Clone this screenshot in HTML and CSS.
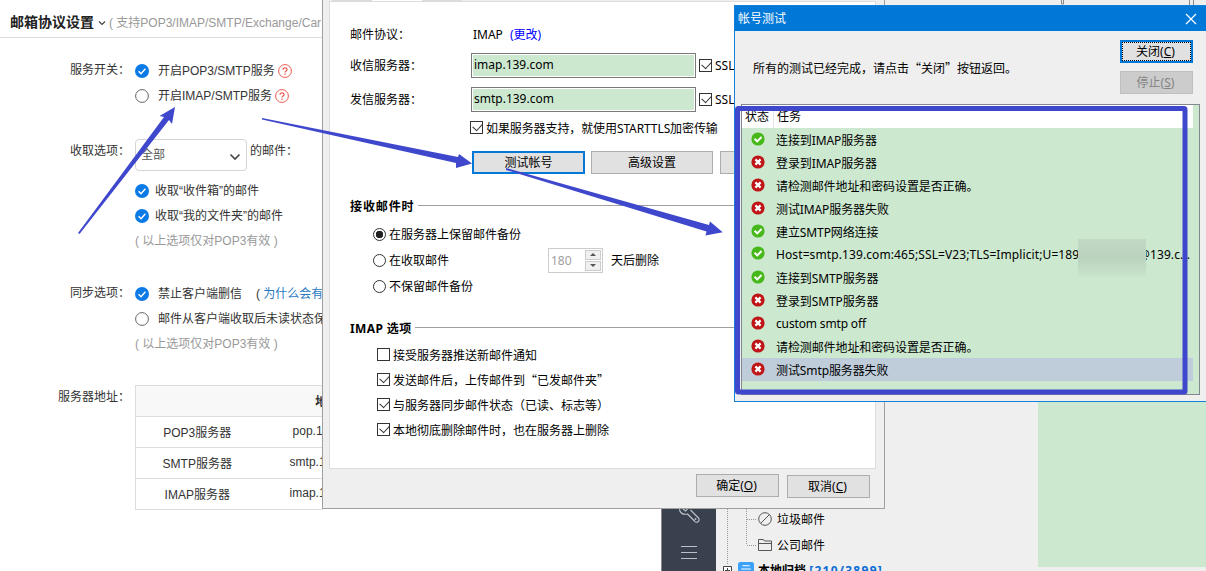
FILE: index.html
```html
<!DOCTYPE html>
<html lang="zh-CN">
<head>
   <meta charset="UTF-8">
   <meta name="viewport" content="width=device-width, initial-scale=1.0">
   <title>邮箱协议设置</title>
   <link rel="stylesheet" href="styles.css">
</head>
<body>
   <!-- shared icons -->
   <svg class="defs">
      <symbol id="tick" viewBox="0 0 14 14">
         <circle cx="7" cy="7" r="7" fill="#0a7ae6"/>
         <path d="M3.6 7.2l2.4 2.5 4.4-5" fill="none" stroke="#fff" stroke-width="1.4"/>
      </symbol>
      <symbol id="empty" viewBox="0 0 14 14">
         <circle cx="7" cy="7" r="6.4" fill="#fff" stroke="#666"/>
      </symbol>
      <symbol id="help" viewBox="0 0 14 14">
         <circle cx="7" cy="7" r="6.4" fill="none" stroke="#ee5b50"/>
         <path d="M5 5.7c0-2.5 4-2.5 4 0C9 7 7 7 7 8.6M7 9.6v1.3" fill="none" stroke="#ee5b50" stroke-width="1.2"/>
      </symbol>
      <symbol id="ok" viewBox="0 0 14 14">
         <circle cx="7" cy="7" r="6.6" fill="#46b81a"/>
         <path d="M3.6 6.8l2.6 2.6 4.4-4.4" fill="none" stroke="#fff" stroke-width="2"/>
      </symbol>
      <symbol id="fail" viewBox="0 0 14 14">
         <circle cx="7" cy="7" r="6.6" fill="#c01517"/>
         <path d="M4.4 4.4l5.2 5.2M9.6 4.4L4.4 9.6" fill="none" stroke="#fff" stroke-width="2.2"/>
      </symbol>
   </svg>

   <div class="desktop">
      <div class="web">
         <header>
            <b>邮箱协议设置</b>
            <svg class="chev" viewBox="0 0 8 6"><path d="M1 1.5l3 3 3-3" fill="none" stroke="#444" stroke-width="1.2"/></svg>
            <span class="gray">( 支持POP3/IMAP/SMTP/Exchange/Car</span>
         </header>

         <div class="group switch">
            <label>服务开关：</label>
            <div>
               <div class="line"><svg class="ic"><use href="#tick"/></svg><span class="wide">开启POP3/SMTP服务</span><svg class="ic help"><use href="#help"/></svg></div>
               <div class="line"><svg class="ic"><use href="#empty"/></svg><span class="wide">开启IMAP/SMTP服务</span><svg class="ic help"><use href="#help"/></svg></div>
            </div>
         </div>

         <div class="group receive">
            <label>收取选项：</label>
            <div>
               <div class="pick">
                  <div class="select">全部<svg viewBox="0 0 12 8"><path d="M1.5 1.5L6 6l4.500-4.500" fill="none" stroke="#444" stroke-width="1.6"/></svg></div>
                  <span>的邮件：</span>
               </div>
               <div class="line"><svg class="ic"><use href="#tick"/></svg><span>收取“收件箱”的邮件</span></div>
               <div class="line"><svg class="ic"><use href="#tick"/></svg><span>收取“我的文件夹”的邮件</span></div>
               <div class="line gray"><span>( 以上选项仅对POP3有效 )</span></div>
            </div>
         </div>

         <div class="group sync">
            <label>同步选项：</label>
            <div>
               <div class="line"><svg class="ic"><use href="#tick"/></svg><span class="wide">禁止客户端删信</span><span class="why">( <a>为什么会有</a></span></div>
               <div class="line"><svg class="ic"><use href="#empty"/></svg><span class="wide">邮件从客户端收取后未读状态保</span></div>
               <div class="line gray"><span>( 以上选项仅对POP3有效 )</span></div>
            </div>
         </div>

         <div class="group address">
            <label>服务器地址：</label>
            <table>
               <tr><th></th><th>地址</th></tr>
               <tr><td>POP3服务器</td><td>pop.139.com</td></tr>
               <tr><td>SMTP服务器</td><td>smtp.139.com</td></tr>
               <tr><td>IMAP服务器</td><td>imap.139.com</td></tr>
            </table>
         </div>
      </div>

      <div class="client">
         <div class="sidebar">
            <svg viewBox="0 0 55 62" width="55" height="62">
               <path d="M17.500 0c0 4 3.500 6 8 5l7 7c2 3 6 0 4-3l-8-8M21 0l2.500 2 2-2" fill="none" stroke="#b9c0c8" stroke-width="1.2"/>
               <circle cx="33.500" cy="10" r="1" fill="#b9c0c8"/>
               <path d="M19 37.500h16M19 43.500h16M19 49.500h16" stroke="#b9c0c8"/>
            </svg>
         </div>
         <div class="tree">
            <div class="node">
               <svg class="ic" viewBox="0 0 14 14"><circle cx="7" cy="7" r="6.300" fill="none" stroke="#555"/><path d="M2.800 11.200l8.400-8.400" stroke="#555"/></svg>垃圾邮件
            </div>
            <div class="node">
               <svg class="ic" viewBox="0 0 14 14"><path d="M.5 12.500v-11h5l1 1.500h7v9.500zM.5 5.500h13" fill="none" stroke="#555"/></svg>公司邮件
            </div>
            <div class="node archive">
               <svg class="plus" viewBox="0 0 9 9"><path d="M.5.5h8v8h-8zM2 4.500h5M4.500 2v5" fill="#fff" stroke="#444"/></svg>
               <svg class="box" viewBox="0 0 15 15"><rect width="15" height="15" rx="2" fill="#3ba1fa"/><path d="M4 3.500h7M3 6.500h9M2 9.500h11" stroke="#fff"/></svg>
               <b>本地归档 <i>[210/3899]</i></b>
            </div>
            <svg class="dots" width="40" height="62"><path d="M11.500 0v56M30.500 0v36M31 10.500h10M31 36.500h10" stroke="#999" stroke-dasharray="1 1"/></svg>
         </div>
         <div class="mail">
            <svg width="168" height="6"><path d="M23.500 0v4h2V0M151.500 0v6M155.500 0v6" fill="none" stroke="#888"/></svg>
         </div>
      </div>

      <div class="settings">
         <div class="tabs"><span></span><span class="on"></span><span></span></div>
         <div class="panel">
            <div class="row proto"><label>邮件协议：</label><span>IMAP</span><a>(更改)</a></div>
            <div class="row server"><label>收信服务器：</label><div class="input">imap.139.com</div><i class="cb on"></i>SSL</div>
            <div class="row server"><label>发信服务器：</label><div class="input">smtp.139.com</div><i class="cb on"></i>SSL</div>
            <div class="row tls"><i class="cb on"></i><span>如果服务器支持，就使用STARTTLS加密传输</span></div>
            <div class="row actions"><button class="focus">测试帐号</button><button>高级设置</button><button></button></div>

            <h3>接收邮件时</h3>
            <div class="row radio"><i class="rb on"></i>在服务器上保留邮件备份</div>
            <div class="row radio"><i class="rb"></i><span class="fetch">在收取邮件</span>
               <div class="spin">180<div><i class="up"></i><i class="down"></i></div></div>天后删除
            </div>
            <div class="row radio"><i class="rb"></i>不保留邮件备份</div>

            <h3 class="second">IMAP 选项</h3>
            <div class="row check"><i class="cb"></i>接受服务器推送新邮件通知</div>
            <div class="row check"><i class="cb on"></i><span>发送邮件后，上传邮件到<q>“</q>已发邮件夹<q>”</q></span></div>
            <div class="row check"><i class="cb on"></i>与服务器同步邮件状态（已读、标志等）</div>
            <div class="row check"><i class="cb on"></i>本地彻底删除邮件时，也在服务器上删除</div>
         </div>
         <div class="foot"><button>确定(<u>O</u>)</button><button>取消(<u>C</u>)</button></div>
      </div>

      <div class="test">
         <div class="title"><span>帐号测试</span><svg viewBox="0 0 12 12"><path d="M1 1l10 10M11 1L1 11" stroke="#fff" stroke-width="1.2"/></svg></div>
         <div class="top">
            <p>所有的测试已经完成，请点击<q>“</q>关闭<q>”</q>按钮返回。</p>
            <div class="btns">
               <button class="focus dotted">关闭(<u>C</u>)</button>
               <button class="off">停止(<u>S</u>)</button>
            </div>
         </div>
         <div class="list">
            <div class="head"><span>状态</span><span>任务</span></div>
            <div class="task"><svg><use href="#ok"/></svg><span>连接到IMAP服务器</span></div>
            <div class="task"><svg><use href="#fail"/></svg><span>登录到IMAP服务器</span></div>
            <div class="task"><svg><use href="#fail"/></svg><span>请检测邮件地址和密码设置是否正确。</span></div>
            <div class="task"><svg><use href="#fail"/></svg><span>测试IMAP服务器失败</span></div>
            <div class="task"><svg><use href="#ok"/></svg><span>建立SMTP网络连接</span></div>
            <div class="task host"><svg><use href="#ok"/></svg><span>Host=smtp.139.com:465;SSL=V23;TLS=Implicit;U=189</span><em>@139.c...</em><div class="mask"></div></div>
            <div class="task"><svg><use href="#ok"/></svg><span>连接到SMTP服务器</span></div>
            <div class="task"><svg><use href="#fail"/></svg><span>登录到SMTP服务器</span></div>
            <div class="task"><svg><use href="#fail"/></svg><span class="plain">custom smtp off</span></div>
            <div class="task"><svg><use href="#fail"/></svg><span>请检测邮件地址和密码设置是否正确。</span></div>
            <div class="task sel"><svg><use href="#fail"/></svg><span>测试Smtp服务器失败</span></div>
         </div>
      </div>

      <!-- marker arrows and frame -->
      <svg class="marks" viewBox="0 0 1206 571">
         <path d="M78 233l86-116-4.500-1L175 107l-3 17-3-4L79.500 234z"/>
         <path d="M262 118L458 157l1-3 13 9.500-16 4.500V163L262 119.500z"/>
         <path d="M506 168L709 225l1-3.500 12.700 10.800-17.200 3.200 1-4L506 170z"/>
         <rect x="737.500" y="108.500" width="447.500" height="283.500" rx="1"/>
      </svg>
   </div>
</body>
</html>
```
FILE: styles.css
```css
*{
   margin: 0;
   padding: 0;
   box-sizing: border-box;
}

body{
   background: #fff;
   overflow: hidden;
}

.defs{
   display: none;
}

.desktop{
   position: relative;
   width: 1206px;
   height: 571px;
   overflow: hidden;
   font: 12px "Noto Sans", "Noto Sans CJK SC", sans-serif;
   color: #000;
   white-space: nowrap;
}

i, em{
   font-style: normal;
}

q{
   quotes: none;
   font-family: "Noto Sans CJK SC", sans-serif;
}

q::before, q::after{
   content: none;
}

/* web mail page */
.web{
   width: 323px;
   height: 571px;
   overflow: hidden;
   font-family: "Liberation Sans", "Noto Sans CJK SC", sans-serif;
   color: #333;
}

.web header{
   display: flex;
   align-items: center;
   height: 38px;
   padding: 6px 0 0 10px;
   border-bottom: 1px solid #ddd;
}

.web header b{
   margin-top: -2px;
   font-size: 14px;
   color: #222;
}

.chev{
   width: 8px;
   height: 6px;
   margin: 2px 3px 0 4px;
   flex: none;
}

.gray{
   color: #999;
}

.group{
   display: flex;
}

.group > label{
   flex: none;
   width: 130px;
   margin-right: 5px;
   line-height: 24px;
   text-align: right;
}

.switch{ margin-top: 20px; }
.receive{ margin-top: 31px; }
.sync{ margin-top: 28px; }
.address{ margin-top: 29px; }

.line{
   display: flex;
   align-items: center;
   height: 25px;
}

.line span{
   margin-top: -2px;
}

.ic{
   flex: none;
   width: 14px;
   height: 14px;
   margin: 1px 6px 0 0;
}

.line .wide{
   margin-left: 3px;
}

.line .help{
   margin-left: 3px;
}

.line .why{
   margin-left: 14px;
}

.why a{
   color: #2878c0;
}

.pick{
   display: flex;
   height: 32px;
   margin-bottom: 7px;
   line-height: 24px;
}

.select{
   display: flex;
   align-items: center;
   justify-content: space-between;
   width: 112px;
   margin-right: 3px;
   padding: 0 5px;
   border: 1px solid #d5d5d5;
   border-radius: 4px;
   color: #555;
}

.select svg{
   width: 12px;
   height: 8px;
   margin-top: 3px;
}

table{
   border-collapse: collapse;
   table-layout: fixed;
   width: 262px;
   flex: none;
   border: 1px solid #ddd;
   text-align: center;
}

tr{
   height: 31px;
   border-bottom: 1px solid #ddd;
}

th{
   background: #f8f8f8;
}

th, td{
   padding-bottom: 2px;
}

td:first-child, th:first-child{
   width: 123px;
}

/* mail client behind the dialogs */
.client{
   position: absolute;
   left: 661px;
   top: 0;
   width: 545px;
   height: 571px;
   display: flex;
   background: #efefef;
}

.sidebar{
   width: 55px;
   padding-top: 509px;
   background: #38414d;
   border-left: 1px solid #888;
}

.tree{
   position: relative;
   width: 322px;
   padding-top: 506px;
}

.node{
   display: flex;
   align-items: center;
   height: 26px;
   padding-left: 42px;
}

.node .ic{
   margin: 0 5px 0 0;
}

.archive{
   padding-left: 7px;
   height: 24px;
}

.plus{
   width: 9px;
   height: 9px;
   margin-right: 6px;
}

.box{
   width: 16px;
   height: 16px;
   margin-right: 4px;
}

.archive i{
   color: #0b6cd4;
   letter-spacing: 1.300px;
}

.dots{
   position: absolute;
   left: 0;
   top: 509px;
}

.mail{
   flex: 1;
   height: 567px;
   background: #cce8cf;
}

.mail svg{
   display: block;
   background: #efefef;
}

/* account settings dialog */
.settings{
   position: absolute;
   left: 322px;
   top: 0;
   width: 563px;
   height: 509px;
   padding-left: 6px;
   background: #efefef;
   border: 1px solid #a0a0a0;
   border-top: 0;
}

.tabs{
   display: flex;
   height: 1px;
   padding-left: 3px;
}

.tabs span{
   width: 40px;
   background: #dcdcdc;
}

.tabs .on{
   width: 50px;
   background: #fff;
}

.panel{
   width: 547px;
   height: 468px;
   padding: 20px 0 0 20px;
   background: #fff;
   border: 1px solid #dcdcdc;
   overflow: hidden;
}

.row{
   display: flex;
   align-items: center;
}

.row label{
   width: 121px;
}

.proto{
   height: 24px;
   margin-bottom: 7px;
}

.proto label{
   width: 123px;
}

.proto a{
   margin-left: 7px;
   color: #00f;
}

.server{
   height: 25px;
   margin-bottom: 9px;
}

.server label{
   margin-top: -1px;
}

.input{
   width: 225px;
   height: 25px;
   margin-right: 3px;
   padding-left: 2px;
   line-height: 21px;
   font-size: 12px;
   background: #cce8cf;
   border: 1px solid #7a7a7a;
   box-shadow: inset 0 0 0 1px #fff;
}

.cb{
   position: relative;
   flex: none;
   width: 13px;
   height: 13px;
   margin-right: 3px;
   background: #fff;
   border: 1px solid #333;
}

.cb.on::after{
   content: "";
   position: absolute;
   left: 2px;
   top: 1px;
   width: 8px;
   height: 5px;
   border-left: 1.500px solid #333;
   border-bottom: 1.500px solid #333;
   transform: rotate(-47deg);
}

.tls{
   height: 17px;
   margin: -2px 0 15px;
   padding-left: 120px;
}

.tls span{
   letter-spacing: -.1px;
}

.actions{
   gap: 6px;
   padding-left: 122px;
}

button{
   flex: none;
   width: 122px;
   height: 23px;
   padding-bottom: 1px;
   font: inherit;
   color: #000;
   background: #e1e1e1;
   border: 1px solid #adadad;
}

button.focus{
   width: 113px;
   border: 2px solid #0078d7;
}

.actions button:last-child{
   margin-left: 1px;
}

h3{
   display: flex;
   align-items: center;
   height: 19px;
   margin: 22px 0 6px;
   font-size: 12px;
   letter-spacing: .9px;
}

h3::after{
   content: "";
   flex: 1;
   height: 1px;
   margin-left: 3px;
   background: #a0a0a0;
}

.second{
   margin: 19px 0 5px;
   letter-spacing: .4px;
}

.radio{
   height: 26px;
   padding-left: 23px;
}

.rb{
   width: 13px;
   height: 13px;
   margin-right: 3px;
   border: 1px solid #333;
   border-radius: 50%;
}

.rb.on{
   background: radial-gradient(circle, #222 3.500px, #fff 4px);
}

.fetch{
   width: 159px;
}

.spin{
   display: flex;
   align-items: center;
   justify-content: space-between;
   width: 55px;
   height: 25px;
   margin-right: 8px;
   padding: 0 1px 0 2px;
   color: #a0a0a0;
   border: 1px solid #ccc;
}

.spin div{
   display: flex;
   flex-direction: column;
   gap: 1px;
}

.spin i{
   display: flex;
   align-items: center;
   justify-content: center;
   width: 16px;
   height: 10px;
   background: #f0f0f0;
   border: 1px solid #ccc;
}

.spin i::after{
   content: "";
   border: 3px solid transparent;
}

.spin .up::after{
   border-top: 0;
   border-bottom-color: #555;
}

.spin .down::after{
   border-bottom: 0;
   border-top-color: #555;
}

.check{
   height: 25px;
   padding-left: 27px;
}

.foot{
   display: flex;
   gap: 8px;
   padding: 5px 0 0 367px;
}

.foot button{
   width: 83px;
   padding-right: 2px;
}

.foot button:last-child{
   margin-top: 1px;
}

/* account test dialog */
.test{
   position: absolute;
   left: 734px;
   top: 5px;
   width: 480px;
   height: 397px;
   background: #efefef;
   border: 1px solid #1580d8;
}

.title{
   display: flex;
   align-items: center;
   justify-content: space-between;
   height: 25px;
   padding: 0 16px 0 3px;
   color: #fff;
   background: #0078d7;
}

.title span{
   margin-top: -2px;
}

.title svg{
   width: 12px;
   height: 12px;
}

.top{
   display: flex;
   justify-content: space-between;
   height: 73px;
   padding: 9px 20px 0 18px;
}

.top p{
   line-height: 56px;
}

.btns{
   display: flex;
   flex-direction: column;
   gap: 8px;
}

.btns button{
   width: 73px;
   padding-right: 2px;
}

.dotted{
   outline: 1px dotted #000;
   outline-offset: -3px;
}

.btns .off{
   color: #838383;
   background: #ccc;
   border-color: #bfbfbf;
}

.list{
   width: 459px;
   height: 291px;
   margin-left: 6px;
   padding-right: 6px;
   background: #cce8cf;
   border: 1px solid #828790;
}

.head{
   display: flex;
   height: 23px;
   line-height: 23px;
   background: #fff;
}

.head span{
   width: 32px;
   padding-left: 3px;
   border-right: 1px solid #e5e5e5;
}

.head span:last-child{
   border: 0;
}

.task{
   position: relative;
   display: flex;
   align-items: center;
   height: 23px;
}

.task span{
   letter-spacing: -.1px;
}

.task svg{
   flex: none;
   width: 14px;
   height: 14px;
   margin: -2px 11px 0 9px;
}

.task.sel{
   background: #bfcddb;
}

.task.host{
   padding-bottom: 1px;
}

.host span{
   letter-spacing: .1px;
}

.task .plain{
   letter-spacing: -.15px;
}

.task em{
   margin-left: auto;
   margin-right: 3px;
   letter-spacing: .1px;
}

.mask{
   position: absolute;
   left: 336px;
   top: -4px;
   width: 68px;
   height: 38px;
   background: linear-gradient(#c2dac5, #bad3be 50%, #c9e5cc);
}

.marks{
   position: absolute;
   left: 0;
   top: 0;
   width: 1206px;
   height: 571px;
   fill: #3f48cc;
}

.marks rect{
   fill: none;
   stroke: #3f48cc;
   stroke-width: 5px;
}
```
